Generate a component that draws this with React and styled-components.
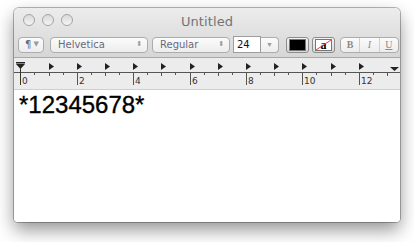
import React from "react";
import styled, { createGlobalStyle } from "styled-components";

const Global = createGlobalStyle`
  html, body { margin: 0; padding: 0; background: #fff; }
  body { font-family: "Liberation Sans", Arial, sans-serif; }
`;

const Page = styled.div`
  width: 414px;
  height: 242px;
  padding: 8px 0 0 14px;
  box-sizing: border-box;
  overflow: hidden;
`;

const Window = styled.div`
  width: 386px;
  height: 214px;
  border-radius: 5px 5px 4px 4px;
  background: #fff;
  box-shadow: 0 0 0 1px rgba(0,0,0,0.28), 0 8px 18px rgba(0,0,0,0.42);
  overflow: hidden;
  display: flex;
  flex-direction: column;
`;

const Chrome = styled.div`
  background: linear-gradient(#ececec, #d6d6d6);
  border-bottom: 1px solid #a9a9a9;
  height: 49px;
  display: flex;
  flex-direction: column;
`;

const TitleBar = styled.div`
  height: 23px;
  position: relative;
  display: flex;
  align-items: center;
  justify-content: center;
`;

const Lights = styled.div`
  position: absolute;
  left: 9px;
  top: 6px;
  display: flex;
  gap: 7px;
`;

const Light = styled.div`
  width: 10px;
  height: 10px;
  border-radius: 50%;
  border: 1px solid #a4a4a4;
  background: linear-gradient(#d9d9d9, #f4f4f4);
`;

const Title = styled.div`
  font-family: "DejaVu Sans", sans-serif;
  font-size: 13px;
  color: #747474;
  letter-spacing: 0.1px;
  margin-top: 3px;
`;

const Toolbar = styled.div`
  display: flex;
  align-items: center;
  padding: 5px 0 0 4px;
  height: 17px;
`;

const Pill = styled.div`
  box-sizing: border-box;
  width: ${p => p.w}px;
  margin-left: ${p => p.ml || 0}px;
  height: 16px;
  border: 1px solid #acacac;
  border-radius: 4px;
  background: linear-gradient(#fbfbfb, #ededed);
  display: flex;
  align-items: center;
  padding: 0 ${p => (p.tight ? 4 : 5)}px 0 ${p => (p.tight ? 6 : 7)}px;
  font-family: "DejaVu Sans", sans-serif;
  font-size: 10px;
  color: #6a6a7c;
  justify-content: space-between;
`;

const Arrow = styled.span`
  font-size: 7px;
  color: #9a9a9a;
  line-height: 1;
`;

const SizeField = styled.div`
  box-sizing: border-box;
  margin-left: 3px;
  width: 28px;
  height: 17px;
  background: #fff;
  border: 1px solid #9c9c9c;
  font-family: "DejaVu Sans", sans-serif;
  font-size: 10px;
  color: #111;
  padding: 2px 0 0 3px;
`;

const SizeArrow = styled.div`
  box-sizing: border-box;
  width: 18px;
  height: 16px;
  border: 1px solid #acacac;
  border-left: none;
  border-radius: 0 4px 4px 0;
  background: linear-gradient(#fbfbfb, #ededed);
  display: flex;
  align-items: center;
  justify-content: center;
`;

const Well = styled.div`
  box-sizing: border-box;
  margin-left: ${p => p.ml}px;
  width: 23px;
  height: 16px;
  border: 1px solid #8c8c8c;
  border-radius: 3px;
  background: linear-gradient(#f4f4f4, #d8d8d8);
  padding: 1px 2px;
  display: flex;
`;

const Swatch = styled.div`
  flex: 1;
  background: ${p => p.c};
  border: 1px solid #777;
  position: relative;
  display: flex;
  align-items: center;
  justify-content: center;
  font-family: "Liberation Serif", serif;
  font-weight: 700;
  font-size: 12px;
  color: #000;
  line-height: 10px;
`;

const Slash = styled.svg`
  position: absolute;
  inset: 0;
  width: 100%;
  height: 100%;
`;

const Segments = styled.div`
  box-sizing: border-box;
  margin-left: 5px;
  width: 59px;
  height: 16px;
  border: 1px solid #acacac;
  border-radius: 4px;
  background: linear-gradient(#fbfbfb, #ededed);
  display: flex;
`;

const Seg = styled.div`
  flex: 1;
  display: flex;
  align-items: center;
  justify-content: center;
  font-family: "Liberation Serif", serif;
  font-size: 10px;
  color: #8a8a8a;
  font-weight: ${p => (p.b ? 700 : 400)};
  font-style: ${p => (p.i ? "italic" : "normal")};
  text-decoration: ${p => (p.u ? "underline" : "none")};
  & + & { border-left: 1px solid #cfcfcf; }
`;

const RulerBar = styled.div`
  height: 31px;
  background: #ececec;
  border-bottom: 1px solid #cfcfcf;
`;

const TextArea = styled.div`
  flex: 1;
  background: #fff;
  padding: 1px 0 0 5px;
  font-family: "Liberation Sans", Arial, sans-serif;
  font-size: 24px;
  line-height: 28px;
  color: #000;
  -webkit-text-stroke: 0.35px #000;
`;

const U = 28.2;
const O = 6.3;

function Ruler() {
  const ticks = [];
  for (let h = 1; h <= 27; h++) {
    const v = h / 2;
    const x = Math.round(O + v * U) + 0.5;
    if (x > 384) break;
    const even = h % 4 === 0;
    const unit = h % 2 === 0;
    ticks.push(
      <line key={"t" + h} x1={x} x2={x} y1={14} y2={even ? 27 : unit ? 18 : 17} stroke="#555" strokeWidth="1" />
    );
    if (even) {
      ticks.push(
        <text key={"l" + h} x={x + 1.5} y={25.5} fontSize="9" fontFamily="DejaVu Sans, sans-serif" fill="#333">
          {v}
        </text>
      );
    }
  }
  const tabs = [];
  for (let u = 1; u <= 12; u++) {
    const x = Math.round(O + u * U);
    tabs.push(<polygon key={"p" + u} points={`${x},5 ${x + 5},8.5 ${x},12`} fill="#222" />);
  }
  return (
    <svg width="386" height="31" viewBox="0 0 386 31">
      <line x1="0" x2="386" y1="14.5" y2="14.5" stroke="#555" />
      {ticks}
      {tabs}
      <rect x="2" y="4" width="9" height="1.5" fill="#222" />
      <polygon points="2,6 11,6 6.5,11" fill="#222" />
      <line x1="6.5" x2="6.5" y1="10" y2="27" stroke="#333" />
      <text x="8" y="25.5" fontSize="9" fontFamily="DejaVu Sans, sans-serif" fill="#333">0</text>
      <polygon points="376,9 385,9 380.5,13" fill="#222" />
    </svg>
  );
}

export default function App() {
  return (
    <Page>
      <Global />
      <Window>
        <Chrome>
          <TitleBar>
            <Lights>
              <Light />
              <Light />
              <Light />
            </Lights>
            <Title>Untitled</Title>
          </TitleBar>
          <Toolbar>
            <Pill w={26} tight>
              <span>¶</span>
              <Arrow>▼</Arrow>
            </Pill>
            <Pill w={98} ml={6}>
              <span>Helvetica</span>
              <Arrow>⬍</Arrow>
            </Pill>
            <Pill w={78} ml={4}>
              <span>Regular</span>
              <Arrow>⬍</Arrow>
            </Pill>
            <SizeField>24</SizeField>
            <SizeArrow>
              <Arrow>▼</Arrow>
            </SizeArrow>
            <Well ml={7}>
              <Swatch c="#000" />
            </Well>
            <Well ml={3}>
              <Swatch c="#fff">
                a
                <Slash viewBox="0 0 17 10" preserveAspectRatio="none">
                  <line x1="0" y1="10" x2="17" y2="0" stroke="#e0302a" strokeWidth="1" />
                </Slash>
              </Swatch>
            </Well>
            <Segments>
              <Seg b>B</Seg>
              <Seg i>I</Seg>
              <Seg u>U</Seg>
            </Segments>
          </Toolbar>
        </Chrome>
        <RulerBar>
          <Ruler />
        </RulerBar>
        <TextArea>*12345678*</TextArea>
      </Window>
    </Page>
  );
}
